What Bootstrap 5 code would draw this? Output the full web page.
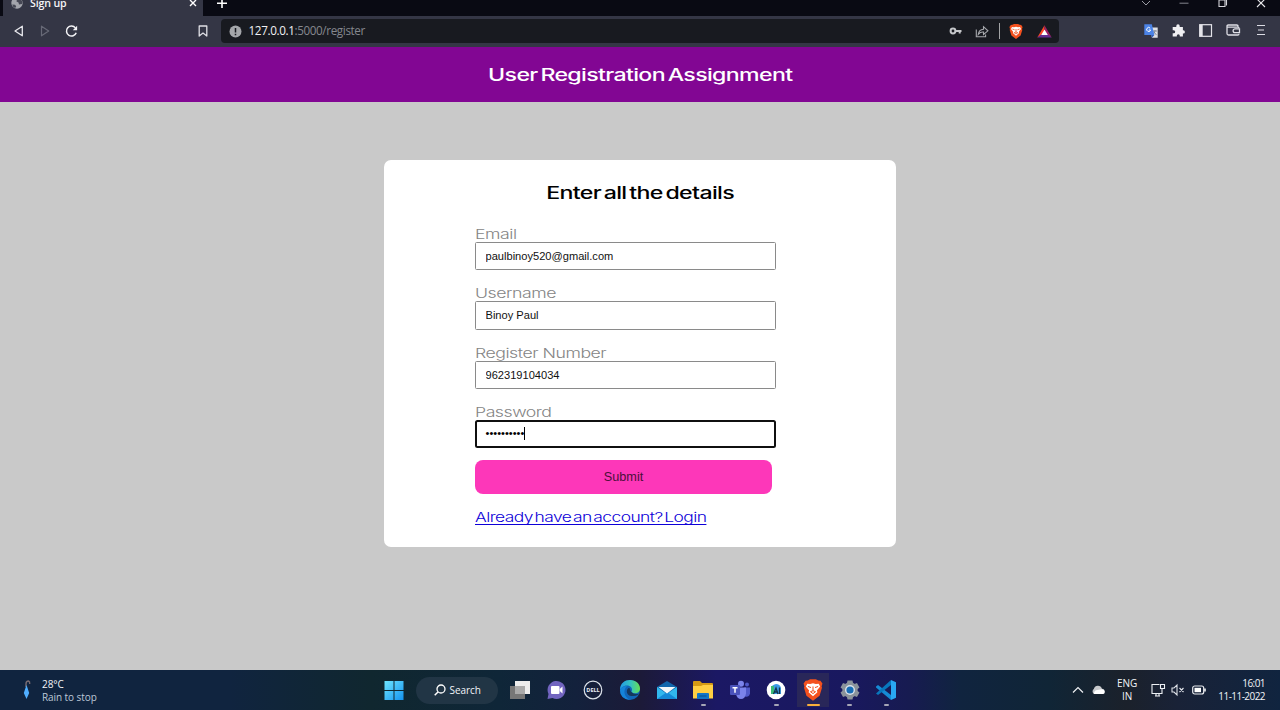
<!DOCTYPE html>
<html lang="en">
<head>
<meta charset="utf-8">
<meta name="viewport" content="width=device-width, initial-scale=1">
<title>Sign up</title>
<link href="https://cdn.jsdelivr.net/npm/bootstrap@5.3.0/dist/css/bootstrap.min.css" rel="stylesheet">
<style>
  html, body { height: 710px; overflow: hidden; }
  body { font-family: "Open Sans", "Noto Sans", sans-serif; background: #c9c9c9; line-height: 1; }
  svg { display: block; flex: none; overflow: visible; }
  /* browser chrome */
  .tabstrip { height: 16px; background: #090a13; }
  .tabstrip svg { clip-path: inset(0 -4px); }
  .tab-item { width: 200px; margin-left: 3px; background: #343645; color: #f4f4f6; padding: 0 6px 0 8px; }
  .tab-title { font-size: 10.6px; font-weight: 600; margin-left: 7px; margin-top: -3px; line-height: 13px; letter-spacing: -.15px; }
  .win-cell { width: 38.3px; }
  .toolbar { height: 30.5px; background: #343645; }
  .nav-cell { width: 26.2px; }
  .urlbar { width: 838px; height: 24px; background: #181a20; border-radius: 4px; margin-left: 13px; color: #85878e; padding: 0 7px 0 8px; }
  .urlbar b { font-weight: 400; color: #f1f1f3; }
  .url-text { font-size: 11.7px; letter-spacing: -.38px; margin-left: 7px; }
  .ext-cell { width: 27.3px; }
  /* page */
  .page-head { height: 55.5px; background: #820693; padding-top: 3px; }
  .wide { font-family: Inter, "Liberation Sans", sans-serif; display: inline-block; white-space: nowrap; transform-origin: 0 50%; transform: scaleX(1.36); line-height: 16px; letter-spacing: -.35px; }
  .wide-center { transform-origin: 50% 50%; transform: scaleX(1.38); letter-spacing: -.48px; word-spacing: -2px; font-size: 16.8px; font-weight: 500; }
  .page-head .wide { color: #fff; }
  .panel { width: 512px; height: 386.5px; margin-top: 58px; border-radius: 7px; background: #fff; padding-top: 25px; }
  .panel h2 { font-size: 16.8px; color: #000; margin: 0 0 24.5px; line-height: 16px; }
  .fields { margin-left: 91px; width: 300px; }
  .field { height: 59.6px; }
  .field:nth-of-type(4) { height: 56px; }
  .field label { display: block; height: 16px; font-size: 13px; color: #858585; }
  .field label .wide { font-weight: 300; }
  .box { width: 300.5px; height: 28.6px; border: 1px solid #8a8a8a; border-radius: 1.5px; padding: 0 9.5px; font: 11.1px "Liberation Sans", sans-serif; color: #111; background: #fff; }
  .box-focus { border: 2px solid #101010; border-radius: 2.5px; padding: 0 8.5px 2px; height: 28px; color: #000; }
  .caret { width: 1px; height: 13px; background: #000; }
  .btn-submit, .btn-submit:hover { width: 297px; height: 33.5px; background: #fd37b9; color: #4a1039; border: 0; border-radius: 8px; font: 12.7px "Liberation Sans", sans-serif; padding: 0; }
  .login { color: #0d00d8; font-size: 13px; font-weight: 300; letter-spacing: -.42px; word-spacing: -2px; margin-top: 15px; text-decoration: underline; text-underline-offset: 1.5px; text-decoration-thickness: 1px; text-decoration-skip-ink: none; transform: scaleX(1.34); }
  /* desktop taskbar */
  .taskbar { height: 40px; color: #f2f4f8; font-size: 10px; background: linear-gradient(90deg, #10243f 0%, #10243f 18%, #10272f 29%, #0f2638 39%, #13213c 45%, #1c1a38 50%, #1b1864 56%, #19185f 66%, #171b51 71%, #10243f 75%, #102536 82%, #1b212b 88%, #192237 92%, #10243f 100%); }
  .weather { width: 376px; padding-left: 20px; }
  .weather-text { margin-left: 10px; line-height: 13px; letter-spacing: -.08px; padding-top: 1px; }
  .task-cell { width: 36.65px; height: 40px; padding-top: 9px; }
  .task-cell::after { content: ""; display: block; width: 5px; height: 2px; border-radius: 2px; margin-top: 3px; background: transparent; flex: none; }
  .task-cell.open::after { background: #a6a6b7; }
  .task-cell.active { background: linear-gradient(#292759, #292759) center 3px / 32px 34px no-repeat; }
  .task-cell.active::after { background: #fbb03b; width: 13px; }
  .task-search { width: 82px; height: 27px; border-radius: 14px; background: #213545; margin: 0 3.5px; font-size: 10px; letter-spacing: -.1px; }
  .tray { padding-right: 15px; height: 40px; }
</style>
</head>
<body class="d-flex flex-column">
<header>
  <div class="tabstrip d-flex">
    <div class="tab-item d-flex align-items-start">
      <svg width="12" height="16" viewBox="0 0 12 16"><circle cx="6" cy="3" r="5.7" fill="#a3a5ac"/><path d="M1.200 4.500l2.800.2 1.200 1.500-1 1.800Q1.500 7 1.200 4.500zM6-1l-.5 2.500 2 1L8 4.500l3-.5.5-2Q10-2 6-1z" fill="#454754"/></svg>
      <span class="tab-title flex-grow-1">Sign up</span>
      <svg width="8" height="16" viewBox="0 0 8 16"><path d="M1 0l6 6M7 0L1 6" stroke="#fff" stroke-width="1.400"/></svg>
    </div>
    <svg class="ms-3" width="10" height="16" viewBox="0 0 10 16"><path d="M3-2v10M-2 3.300h10" stroke="#fff" stroke-width="1.600"/></svg>
    <div class="d-flex ms-auto">
      <div class="win-cell d-flex justify-content-center"><svg width="10" height="16" viewBox="0 0 10 16"><path d="M1 1l4 4 4-4" fill="none" stroke="#9a9ba3"/></svg></div>
      <div class="win-cell d-flex justify-content-center"><svg width="10" height="16" viewBox="0 0 10 16"><path d="M.5 3.200h9" stroke="#85868e"/></svg></div>
      <div class="win-cell d-flex justify-content-center"><svg width="10" height="16" viewBox="0 0 10 16"><path d="M1 0h6v6.500H1zM3-1.500h3.500q2 0 2 2v5" fill="none" stroke="#d4d4d9" stroke-width="1.100"/></svg></div>
      <div class="win-cell d-flex justify-content-center"><svg width="10" height="16" viewBox="0 0 10 16"><path d="M1-1l8 8M9-1L1 7" stroke="#e5e5e8" stroke-width="1.100"/></svg></div>
    </div>
  </div>
  <div class="toolbar d-flex align-items-center">
    <div class="d-flex" style="margin-left:6px">
      <div class="nav-cell d-flex justify-content-center"><svg width="12" height="12" viewBox="0 0 12 12"><path d="M9.300 1.200v9.600L2 6z" fill="none" stroke="#e8e8ed" stroke-width="1.300" stroke-linejoin="round"/></svg></div>
      <div class="nav-cell d-flex justify-content-center"><svg width="12" height="12" viewBox="0 0 12 12"><path d="M2.500 1.200v9.600L9.700 6z" fill="none" stroke="#686a77" stroke-width="1.200" stroke-linejoin="round"/></svg></div>
      <div class="nav-cell d-flex justify-content-center"><svg width="12" height="12" viewBox="0 0 12 12"><path d="M11.200 7.700A5 5 0 1 1 10.400 2.900" fill="none" stroke="#f4f4f7" stroke-width="1.500"/><path d="M12.100.7v4.500H7.800z" fill="#f4f4f7"/></svg></div>
    </div>
    <svg width="10" height="12" viewBox="0 0 10 12" style="margin-left:113px"><path d="M1.200 1h7.600v10L5 8.100 1.200 11z" fill="none" stroke="#dfdfe5" stroke-width="1.300" stroke-linejoin="round"/></svg>
    <div class="urlbar d-flex align-items-center">
      <svg width="13" height="13" viewBox="0 0 13 13"><circle cx="6.500" cy="6.500" r="6" fill="#a4a6aa"/><path d="M6.500 3v4.400M6.500 8.700v1.500" stroke="#181a20" stroke-width="1.500"/></svg>
      <span class="url-text"><b>127.0.0.1</b>:5000/register</span>
      <svg class="ms-auto" width="13" height="12" viewBox="0 0 13 12"><circle cx="4" cy="6" r="2.400" fill="none" stroke="#c5c7ca" stroke-width="2"/><path d="M6.500 6h6M10.700 6v2.500" stroke="#c5c7ca" stroke-width="2"/></svg>
      <svg width="14" height="13" viewBox="0 0 14 13" style="margin-left:13px"><path d="M1.300 4.500v7.300h9.300V9.500M3.300 9.300q.6-4.700 5.200-5V1.700l4.400 4.100-4.400 3.700V7.100q-3.200-.3-5.200 2.200z" fill="none" stroke="#a7a9ad" stroke-width="1.100"/></svg>
      <span class="vr align-self-center" style="margin:0 9px 0 9.5px;color:#fff;height:13px;opacity:.6"></span>
      <svg width="14" height="15" viewBox="0 0 14 15"><path id="shield" d="M3.300.8L5 0h4l1.700.8 1.500.2L13.600 3 13 5l.3 1-1.700 5.500L7 15 2.400 11.500.7 6 1 5 .4 3 1.800 1z" fill="#f4511e"/><path d="M3 3.100l2 .2L7 2.700l2 .6 2-.2 1 2-2.300 2.800.4 1.200L7 11.800 3.900 9.100l.4-1.200L2 5.100z" fill="#fff"/><path d="M3.400 5l2.200.8M10.600 5l-2.200.8M7 5v3M5.200 8.700L7 8l1.800.7L7 10z" stroke="#f4511e" stroke-width=".8" fill="none"/></svg>
      <svg width="15" height="13" viewBox="0 0 15 13" style="margin-left:14px"><path d="M7.500.2L.3 12.600 7.500 8z" fill="#ff4724"/><path d="M7.500.2l7.200 12.400L7.500 8z" fill="#9e1f63"/><path d="M.3 12.600h14.400L7.500 7z" fill="#662d91"/><path d="M7.500 4.500l3.300 5.600H4.200z" fill="#fff"/></svg>
    </div>
    <div class="d-flex ms-auto" style="margin-right:6px">
      <div class="ext-cell d-flex justify-content-center"><svg width="14" height="14" viewBox="0 0 14 14"><path d="M5 3.500h8.700v10.200H8z" fill="#dfe1e5"/><path d="M9 7h4M11 6v1q0 2.500-3 4M9.700 7.500l2.800 3.600" stroke="#80858e" stroke-width=".9" fill="none"/><path d="M.3.3h7.500L10.400 11H.3z" fill="#4b83e6"/><path d="M7 11h3.400L8 13.800z" fill="#315bb5"/><path d="M6.200 4.200A2 2 0 1 0 6.600 6H4.800" fill="none" stroke="#fff" stroke-width="1"/></svg></div>
      <div class="ext-cell d-flex justify-content-center"><svg width="13" height="13" viewBox="0 0 13 13"><path d="M.7 3h3.600V2a1.700 1.700 0 0 1 3.400 0v1h3.200v3.300h.4a1.600 1.600 0 0 1 0 3.200h-.4v3.100H7.800v-.8a1.500 1.500 0 0 0-3 0v.8H.7V9.200h1a1.500 1.500 0 0 0 0-3h-1z" fill="#f0f0f3"/></svg></div>
      <div class="ext-cell d-flex justify-content-center"><svg width="14" height="13" viewBox="0 0 14 13"><rect x=".7" y=".7" width="11.800" height="11.600" fill="none" stroke="#e4e4e9" stroke-width="1.200"/><path d="M.7.7h3v11.600h-3z" fill="#e4e4e9"/></svg></div>
      <div class="ext-cell d-flex justify-content-center"><svg width="15" height="12" viewBox="0 0 15 12"><path d="M12 3.600V2.300Q12 1 10.700 1H2.300Q1 1 1 2.300v7.200Q1 11 2.500 11h9.200q1.300 0 1.300-1.300M1 3.200h11q1 0 1 1" fill="none" stroke="#dedee5" stroke-width="1.300"/><path d="M13.500 4.800H9a1.900 1.900 0 0 0 0 3.800h4.500z" fill="#343645" stroke="#dedee5" stroke-width="1.300"/></svg></div>
      <div class="ext-cell d-flex justify-content-center"><svg width="9" height="12" viewBox="0 0 9 12"><path d="M1 1.500h8M2 6h6M1 10.500h8" stroke="#dcdce4" stroke-width="1.200"/></svg></div>
    </div>
  </div>
</header>

<div class="page-head d-flex align-items-center justify-content-center">
  <h1 class="m-0 fs-6"><span class="wide wide-center">User Registration Assignment</span></h1>
</div>

<main class="flex-grow-1">
  <section class="panel mx-auto">
    <h2 class="text-center"><span class="wide wide-center">Enter all the details</span></h2>
    <form class="fields">
      <div class="field"><label for="email"><span class="wide">Email</span></label><input class="box d-block" id="email" value="paulbinoy520@gmail.com"></div>
      <div class="field"><label for="user"><span class="wide">Username</span></label><input class="box d-block" id="user" value="Binoy Paul"></div>
      <div class="field"><label for="reg"><span class="wide">Register Number</span></label><input class="box d-block" id="reg" value="962319104034"></div>
      <div class="field"><label><span class="wide">Password</span></label><div class="box box-focus d-flex align-items-center">••••••••••<span class="caret"></span></div></div>
      <button type="button" class="btn btn-submit d-block">Submit</button>
      <a href="#" class="wide login">Already have an account? Login</a>
    </form>
  </section>
</main>

<footer class="taskbar d-flex align-items-center">
  <div class="weather d-flex align-items-center">
    <svg width="12" height="20" viewBox="0 0 12 20"><path d="M6 7V4q0-3 2.500-3Q10 1.500 9.700 4" fill="none" stroke="#796b70" stroke-width="1.400"/><path d="M6.500 5l2.700 8-2.700 6L3.800 13z" fill="#50aeff"/></svg>
    <div class="weather-text"><div>28°C</div><div style="color:#bdc8d7">Rain to stop</div></div>
  </div>
  <div class="task-cell d-flex flex-column align-items-center"><svg width="20" height="22" viewBox="0 0 20 22"><defs><linearGradient id="win" x2="1" y2="1"><stop stop-color="#6ee6ff"/><stop offset="1" stop-color="#1492ef"/></linearGradient></defs><path d="M.5 2h9v9h-9zM10.500 2h9v9h-9zM.5 12h9v9h-9zM10.500 12h9v9h-9z" fill="url(#win)"/></svg></div>
  <div class="task-search d-flex align-items-center justify-content-center"><svg width="12" height="12" viewBox="0 0 12 12"><circle cx="7" cy="5" r="4" fill="none" stroke="#fff" stroke-width="1.300"/><path d="M4 8L.7 11.300" stroke="#fff" stroke-width="1.500"/></svg><span class="ms-1">Search</span></div>
  <div class="task-cell d-flex flex-column align-items-center"><svg width="20" height="22" viewBox="0 0 20 22"><path d="M5 2h15v13H5z" fill="#ededed"/><path d="M0 7h15v13H0z" fill="#777"/><path d="M5 7h10v8H5z" fill="#aaa"/></svg></div>
  <div class="task-cell d-flex flex-column align-items-center"><svg width="20" height="22" viewBox="0 0 20 22"><path d="M.5 20l1-5a9 9 0 1 1 4 4z" fill="#7164bf"/><rect x="4" y="7" width="8.500" height="8" rx="1" fill="#fff"/><path d="M12.700 10l2.800-2.500v7L12.700 12z" fill="#fff"/></svg></div>
  <div class="task-cell d-flex flex-column align-items-center"><svg width="20" height="22" viewBox="0 0 20 22"><circle cx="10" cy="11" r="8.800" fill="none" stroke="#dce2ea" stroke-width="1.200"/><text x="3.300" y="13.300" font-size="6" font-weight="700" textLength="13.400" lengthAdjust="spacingAndGlyphs" fill="#e9eef5">DELL</text></svg></div>
  <div class="task-cell d-flex flex-column align-items-center"><svg width="20" height="22" viewBox="0 0 20 22"><defs><linearGradient id="edgeTop"><stop stop-color="#2299e8"/><stop offset=".55" stop-color="#36c4bd"/><stop offset="1" stop-color="#67df53"/></linearGradient></defs><circle cx="10" cy="11" r="10" fill="#1166b9"/><path d="M0 11C0 4 5 1 10 1c6 0 10 4 10 8.500 0 5-6.500 6-8.500 3.500C13.500 9 10 6.500 7 6.500 3 6.500 1 9 0 11z" fill="url(#edgeTop)"/><path d="M0 11q2-4 7-4-3 3-2.500 7t5.500 7Q0 20 0 11z" fill="#1584da"/><path d="M11.500 13c-2-1.500-.5-4-3-4-3 2-2 8 3 8q4 .5 7-1.500l.9-1Q14 16 11.500 13z" fill="#15375c"/></svg></div>
  <div class="task-cell d-flex flex-column align-items-center"><svg width="20" height="22" viewBox="0 0 20 22"><path d="M0 8l10-6 10 6v12H0z" fill="#1266ac"/><path d="M0 8l10 7 10-7v12H0z" fill="#31b7ee"/><path d="M0 20l10-7 10 7z" fill="#1489d8"/><path d="M1.500 8h17L10 14.500z" fill="#f3f7fa"/></svg></div>
  <div class="task-cell open d-flex flex-column align-items-center"><svg width="20" height="22" viewBox="0 0 20 22"><path d="M0 3q0-1 1-1h6l2 2h10q1 0 1 1v14H0z" fill="#d59a14"/><path d="M0 7h8l2-1h10v13.500H0z" fill="#ffcf43"/><path d="M4 20v-5q0-1 1-1h10q1 0 1 1v5z" fill="#1376c7"/><path d="M6.500 17h7" stroke="#064e8c" stroke-width="1"/></svg></div>
  <div class="task-cell d-flex flex-column align-items-center"><svg width="20" height="22" viewBox="0 0 20 22"><circle cx="11" cy="4.700" r="3" fill="#7b83eb"/><circle cx="17" cy="5.500" r="2" fill="#5059c9"/><path d="M14 8.500h6v6q-1 4-5 3z" fill="#5059c9"/><path d="M6 8.500h10v6q-1 5.500-5 5.500t-5-5z" fill="#7b83eb"/><rect y="6" width="10" height="10" rx="1" fill="#4b53bc"/><path d="M2.500 8.800h5M5 8.800v5" stroke="#fff" stroke-width="1.500"/></svg></div>
  <div class="task-cell open d-flex flex-column align-items-center"><svg width="20" height="22" viewBox="0 0 20 22"><circle cx="10" cy="11" r="9.300" fill="#fff"/><path d="M5 10q0-4 5-5 4 0 5 4v6H6z" fill="#3c9be5"/><path d="M5 7h3v8H5z" fill="#39bc78"/><path d="M7.500 15L10 9l2 6M8.500 13h3M13.500 8.500V15" stroke="#12354c" stroke-width="1.300" fill="none"/></svg></div>
  <div class="task-cell open active d-flex flex-column align-items-center"><svg width="20" height="22" viewBox="0 0 14 15"><use href="#shield"/><path d="M3 3.100l2 .2L7 2.700l2 .6 2-.2 1 2-2.300 2.800.4 1.200L7 11.800 3.900 9.100l.4-1.200L2 5.100z" fill="#fff"/><path d="M3.400 5l2.200.8M10.600 5l-2.200.8M7 5v3M5.200 8.700L7 8l1.800.7L7 10z" stroke="#f4511e" stroke-width=".7" fill="none"/></svg></div>
  <div class="task-cell open d-flex flex-column align-items-center"><svg width="20" height="22" viewBox="0 0 20 22"><g fill="#8b939b"><circle cx="10" cy="11" r="7.700"/><path id="tooth" d="M7.500 1.500h5l.8 4h-6.600zM7.500 20.500h5l.8-4h-6.600z"/><use href="#tooth" transform="rotate(60 10 11)"/><use href="#tooth" transform="rotate(120 10 11)"/></g><circle cx="10" cy="11" r="5" fill="#d9e2ea"/><circle cx="10" cy="11" r="3.600" fill="#176cb5"/></svg></div>
  <div class="task-cell open d-flex flex-column align-items-center"><svg width="20" height="22" viewBox="0 0 20 22"><path d="M15 1l5 2.300v15.400L15 21z" fill="#29a8f2"/><path d="M0 7.500L2 6l13 10v5L0 8.500z" fill="#168bd5"/><path d="M0 14.500L15 1v5L2 16z" fill="#0877bd"/></svg></div>
  <div class="tray d-flex align-items-center ms-auto">
    <svg width="12" height="8" viewBox="0 0 12 8"><path d="M1 6.500l5-5 5 5" fill="none" stroke="#eef0f3" stroke-width="1.200"/></svg>
    <svg width="14" height="10" viewBox="0 0 14 10" style="margin-left:7px"><path d="M3 9a3 3 0 0 1-.2-5Q4 .5 7 .7q3 0 4 3 2.500 0 2.700 2.800Q13.500 9 11 9z" fill="#c7c9cc"/><path d="M3 9q0-4 3.500-4l4-.800q3 .3 3.200 2.800T11 9z" fill="#fff"/></svg>
    <div class="text-center" style="margin-left:12px;line-height:13px">ENG<br>IN</div>
    <svg width="14" height="14" viewBox="0 0 14 14" style="margin-left:14px"><path d="M8.500 1.500H1v9h10V6M4 13h5M5 11v2M8 11v2M11 6v4" fill="none" stroke="#edf0f4" stroke-width="1.100"/><path d="M9.500 1.500h4v4h-4z" fill="#1b2233" stroke="#edf0f4" stroke-width="1.100"/></svg>
    <svg width="14" height="12" viewBox="0 0 14 12" style="margin-left:6px"><path d="M1 4h2l3-3v10L3 8H1zM8.500 4l4 4M12.500 4l-4 4" fill="none" stroke="#dfe2e8" stroke-width="1.100"/></svg>
    <svg width="14" height="10" viewBox="0 0 14 10" style="margin-left:7px"><rect x=".7" y="1" width="11" height="8" rx="2" fill="none" stroke="#e9ebef" stroke-width="1.200"/><path d="M2.500 2.800h6.500v4.400H2.500z" fill="#fff"/><path d="M13 3.500v3" stroke="#fff" stroke-width="1.500"/></svg>
    <div class="text-end" style="margin-left:12px;line-height:13px;letter-spacing:-.55px">16:01<br>11-11-2022</div>
  </div>
</footer>
<script src="https://cdn.jsdelivr.net/npm/bootstrap@5.3.0/dist/js/bootstrap.bundle.min.js"></script>
</body>
</html>
